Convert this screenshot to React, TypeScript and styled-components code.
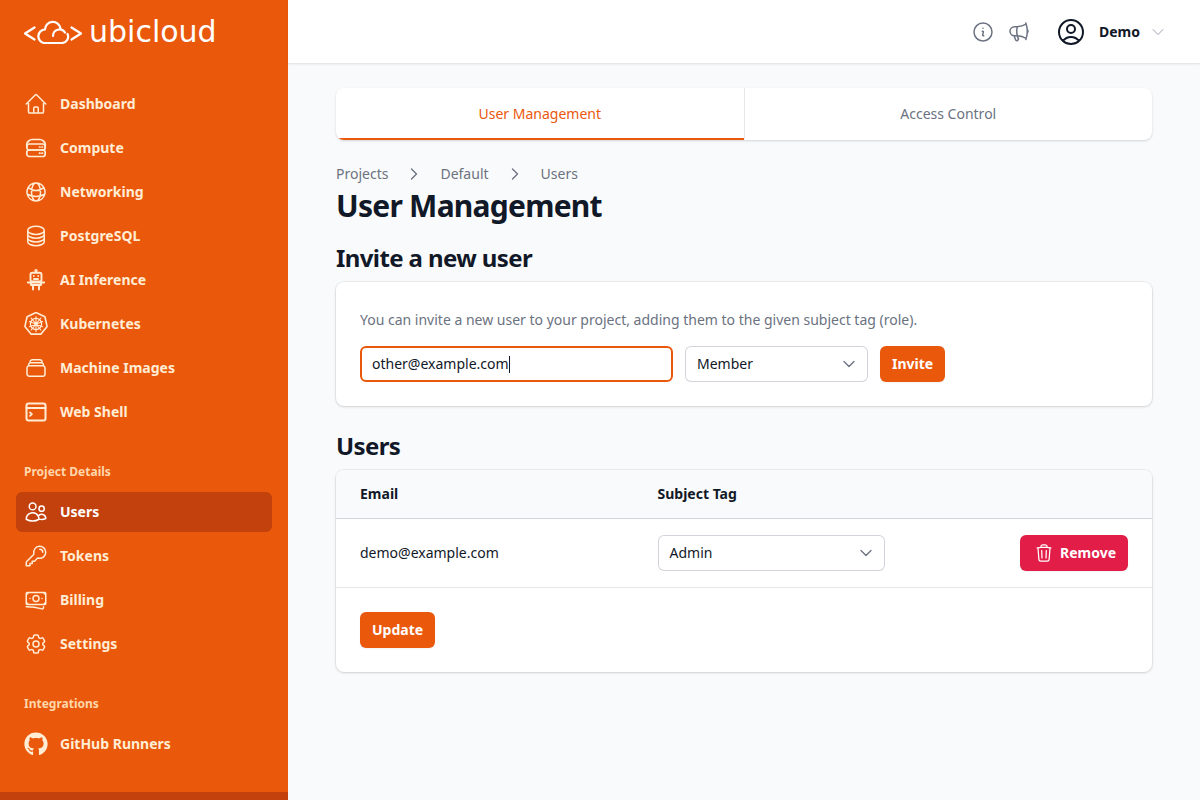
import React from 'react';
import styled, { createGlobalStyle } from 'styled-components';
import {
  HiOutlineHome, HiOutlineGlobeAlt, HiOutlineCircleStack, HiOutlineRectangleStack,
  HiOutlineUsers, HiOutlineKey, HiOutlineBanknotes, HiOutlineCog6Tooth,
  HiOutlineInformationCircle, HiOutlineMegaphone, HiOutlineUserCircle,
  HiOutlineChevronDown, HiOutlineChevronRight, HiOutlineTrash,
} from 'react-icons/hi2';
import { FaGithub } from 'react-icons/fa';

const Global = createGlobalStyle`
  html, body { margin: 0; padding: 0; height: 100%; }
  body { font-family: "Noto Sans", "Liberation Sans", sans-serif; line-height: 20px; background: #f9fafb; color: #111827; overflow: hidden; }
  * { box-sizing: border-box; }
`;

const Page = styled.div`display: flex; width: 1200px; height: 800px; overflow: hidden;`;
const Sidebar = styled.aside`width: 288px; height: 800px; flex: none; background: #ea580c; display: flex; flex-direction: column; border-bottom: 8px solid #c2410c;`;
const LogoRow = styled.div`height: 64px; padding-left: 24px; display: flex; align-items: center; gap: 6px; color: #fff; flex: none;`;
const Wordmark = styled.span`font-family: "DejaVu Sans", sans-serif; font-weight: 400; font-size: 30px; line-height: 1; color: #fff; position: relative; top: 0;`;
const Nav = styled.nav`padding: 20px 16px 0; display: flex; flex-direction: column; gap: 4px;`;
const NavItem = styled.a<{ $active?: boolean }>`
  height: 40px; padding: 0 8px; display: flex; align-items: center; gap: 12px; border-radius: 6px;
  font-size: 14px; font-weight: 700; color: ${p => (p.$active ? '#fff' : '#ffedd5')};
  background: ${p => (p.$active ? '#c2410c' : 'transparent')};
  svg { width: 24px; height: 24px; flex: none; color: ${p => (p.$active ? '#fff' : '#ffedd5')}; }
`;
const NavLabel = styled.div`
  font-size: 12px; font-weight: 700; line-height: 16px; color: #fed7aa; padding-left: 8px;
  margin-top: 28px; margin-bottom: 8px;
`;

const Column = styled.div`flex: 1; display: flex; flex-direction: column; min-width: 0;`;
const Header = styled.header`height: 64px; flex: none; background: #fff; border-bottom: 1px solid #e5e7eb; box-shadow: 0 1px 2px rgba(0,0,0,.05); display: flex; align-items: center; justify-content: flex-end; padding-right: 34px;`;
const HeaderIcon = styled.span`display: flex; color: #6b7280; margin-right: 12px; svg { width: 24px; height: 24px; }`;
const Profile = styled.div`display: flex; align-items: center; margin-left: 12px;`;
const Avatar = styled.span`display: flex; color: #111827; margin-right: 12px; svg { width: 32px; height: 32px; }`;
const ProfileName = styled.span`font-size: 14px; font-weight: 700; color: #111827; margin-right: 10px;`;
const ProfileChevron = styled.span`display: flex; color: #9ca3af; svg { width: 16px; height: 16px; }`;

const Main = styled.main`flex: 1; padding: 24px 48px 0;`;
const Tabs = styled.div`display: flex; height: 52px; background: #fff; border-radius: 8px; box-shadow: 0 1px 3px rgba(0,0,0,.1), 0 1px 2px rgba(0,0,0,.06); overflow: hidden;`;
const Tab = styled.div<{ $active?: boolean }>`
  flex: 1; display: flex; align-items: center; justify-content: center; padding-top: 2px; font-size: 14px; font-weight: 400;
  color: ${p => (p.$active ? '#ea580c' : '#6b7280')};
  border-bottom: 2px solid ${p => (p.$active ? '#ea580c' : 'transparent')};
  & + & { border-left: 1px solid #e5e7eb; }
`;
const Crumbs = styled.div`display: flex; align-items: center; margin-top: 24px; height: 20px; font-size: 14px; color: #6b7280; svg { width: 16px; height: 16px; margin: 0 18px; color: #6b7280; stroke-width: 2; }`;
const Title = styled.h1`margin: 4px 0 0; font-size: 30px; line-height: 36px; font-weight: 700; letter-spacing: -0.025em; color: #111827;`;
const Section = styled.h2<{ $top: number }>`margin: ${p => p.$top}px 0 8px; font-size: 24px; line-height: 32px; font-weight: 700; letter-spacing: -0.025em; color: #111827;`;
const Card = styled.section`background: #fff; border-radius: 8px; box-shadow: 0 1px 3px rgba(0,0,0,.12), 0 0 0 1px rgba(0,0,0,.05);`;
const InviteBody = styled.div`padding: 24px;`;
const Help = styled.p`margin: 4px 0 16px; font-size: 14px; line-height: 20px; color: #6b7280;`;
const InviteForm = styled.div`display: flex; gap: 12px;`;
const FakeInput = styled.div`width: 313px; height: 36px; border-radius: 6px; border: 2px solid #ea580c; background: #fff; display: flex; align-items: center; padding-left: 10px; font-size: 14px; color: #111827;`;
const Caret = styled.span`display: inline-block; width: 1px; height: 17px; background: #111827;`;
const Select = styled.div<{ $width: number }>`
  width: ${p => p.$width}px; height: 36px; border-radius: 6px; background: #fff; box-shadow: inset 0 0 0 1px #d1d5db;
  display: flex; align-items: center; justify-content: space-between; padding: 0 11px 0 12px; font-size: 14px; color: #111827;
  svg { width: 16px; height: 16px; color: #6b7280; stroke-width: 2; }
`;
const Button = styled.button<{ $danger?: boolean }>`
  height: 36px; border: 0; border-radius: 6px; padding: 0 12px 0 ${p => (p.$danger ? 14 : 12)}px; display: inline-flex; align-items: center; gap: 6px;
  font-family: inherit; font-size: 14px; line-height: 20px; font-weight: 700; color: #fff;
  background: ${p => (p.$danger ? '#e11d48' : '#ea580c')};
  box-shadow: 0 1px 2px rgba(0,0,0,.05);
  svg { width: 20px; height: 20px; }
`;
const TableHead = styled.div`height: 49px; display: grid; grid-template-columns: 297.5px 1fr; align-items: center; padding: 0 24px; background: #f9fafb; border-bottom: 1px solid #d1d5db; border-radius: 8px 8px 0 0; font-size: 14px; font-weight: 700; color: #111827;`;
const TableRow = styled.div`height: 69px; display: grid; grid-template-columns: 297.5px 1fr auto; align-items: center; padding: 0 24px; border-bottom: 1px solid #e5e7eb; font-size: 14px; color: #111827;`;
const TableFoot = styled.div`padding: 24px;`;

const Logo = () => (
  <svg width="59" height="24" viewBox="0 0 59 24" fill="none" stroke="#fff" strokeWidth="2.2" strokeLinecap="round" strokeLinejoin="round">
    <path d="M10.5 7.5 1 13.5l9.5 6" />
    <path d="M47.5 7.5 57 13.5l-9.5 6" />
    <path d="M36.5 8.5A7.8 7.8 0 0 0 21 9.5 6.8 6.8 0 0 0 20 23H38a6.3 6.3 0 0 0 5.5-9" />
    <path d="M29 16a6.5 6.5 0 0 1 12-3.5" />
  </svg>
);
const Stroke: React.FC<{ children: React.ReactNode }> = ({ children }) => (
  <svg viewBox="0 0 24 24" fill="none" stroke="currentColor" strokeWidth="1.7" strokeLinecap="round" strokeLinejoin="round">{children}</svg>
);
const ComputeIcon = () => (
  <Stroke>
    <path d="M2.8 11V8C2.8 6 6 3.5 8 3.500h8c2 0 5.200 2.500 5.200 4.500V11" />
    <rect x="2.800" y="8" width="18.400" height="6" rx="2.500" />
    <rect x="2.800" y="14" width="18.400" height="6.500" rx="2.500" />
    <path d="M15.500 11h.5M18 11h.5M15.500 17.200h.5M18 17.200h.5" />
  </Stroke>
);
const RobotIcon = () => (
  <svg viewBox="0 0 24 24" fill="none" stroke="currentColor" strokeWidth="1.9" strokeLinecap="round" strokeLinejoin="round">
    <circle cx="12" cy="2.600" r="1" strokeWidth="1.400" />
    <rect x="6.500" y="4.800" width="11" height="8.700" rx="1.800" />
    <circle cx="9.800" cy="8" r=".9" fill="currentColor" stroke="none" />
    <circle cx="14.200" cy="8" r=".9" fill="currentColor" stroke="none" />
    <path d="M10 11h4M3.800 14.500h16.400M7 14.500v2.500h10v-2.500M9 17v4.500M15 17v4.500" />
  </svg>
);
const KubeIcon = () => (
  <svg viewBox="0 0 24 24" fill="none" stroke="currentColor" strokeWidth="1.6" strokeLinecap="round" strokeLinejoin="round">
    <path d="M12 .5 20.900 4.800l2.200 9.600-6.100 7.700H7l-6.100-7.700L3.100 4.800Z" />
    <circle cx="12" cy="12" r="5.600" strokeWidth="1.300" />
    <circle cx="12" cy="12" r="1.200" />
    <path d="M12 4.500v15M5.500 9.500l13 5.300M18.500 9.500l-13 5.300M7.200 18 16.800 6M16.800 18 7.200 6" strokeWidth="1.100" />
  </svg>
);
const ShellIcon = () => (
  <Stroke>
    <rect x="2.500" y="3.500" width="19" height="17" rx="2" strokeWidth="2" />
    <path d="M2.500 8h19" strokeWidth="2" />
    <path d="m6 12.500 2 1.700-2 1.700" />
  </Stroke>
);

const main = [
  ['Dashboard', <HiOutlineHome />],
  ['Compute', <ComputeIcon />],
  ['Networking', <HiOutlineGlobeAlt />],
  ['PostgreSQL', <HiOutlineCircleStack />],
  ['AI Inference', <RobotIcon />],
  ['Kubernetes', <KubeIcon />],
  ['Machine Images', <HiOutlineRectangleStack />],
  ['Web Shell', <ShellIcon />],
] as const;
const details = [
  ['Users', <HiOutlineUsers />],
  ['Tokens', <HiOutlineKey />],
  ['Billing', <HiOutlineBanknotes />],
  ['Settings', <HiOutlineCog6Tooth />],
] as const;

export default function App() {
  return (
    <Page>
      <Global />
      <Sidebar>
        <LogoRow><Logo /><Wordmark>ubicloud</Wordmark></LogoRow>
        <Nav>
          {main.map(([label, icon]) => <NavItem key={label}>{icon}{label}</NavItem>)}
          <NavLabel>Project Details</NavLabel>
          {details.map(([label, icon]) => <NavItem key={label} $active={label === 'Users'}>{icon}{label}</NavItem>)}
          <NavLabel>Integrations</NavLabel>
          <NavItem><FaGithub />GitHub Runners</NavItem>
        </Nav>
      </Sidebar>
      <Column>
        <Header>
          <HeaderIcon><HiOutlineInformationCircle /></HeaderIcon>
          <HeaderIcon><HiOutlineMegaphone /></HeaderIcon>
          <Profile>
            <Avatar><HiOutlineUserCircle /></Avatar>
            <ProfileName>Demo</ProfileName>
            <ProfileChevron><HiOutlineChevronDown /></ProfileChevron>
          </Profile>
        </Header>
        <Main>
          <Tabs>
            <Tab $active>User Management</Tab>
            <Tab>Access Control</Tab>
          </Tabs>
          <Crumbs>Projects<HiOutlineChevronRight />Default<HiOutlineChevronRight />Users</Crumbs>
          <Title>User Management</Title>
          <Section $top={18}>Invite a new user</Section>
          <Card>
            <InviteBody>
              <Help>You can invite a new user to your project, adding them to the given subject tag (role).</Help>
              <InviteForm>
                <FakeInput>other@example.com<Caret /></FakeInput>
                <Select $width={183}>Member<HiOutlineChevronDown /></Select>
                <Button>Invite</Button>
              </InviteForm>
            </InviteBody>
          </Card>
          <Section $top={24}>Users</Section>
          <Card>
            <TableHead><span>Email</span><span>Subject Tag</span></TableHead>
            <TableRow>
              <span>demo@example.com</span>
              <Select $width={227}>Admin<HiOutlineChevronDown /></Select>
              <Button $danger><HiOutlineTrash />Remove</Button>
            </TableRow>
            <TableFoot><Button>Update</Button></TableFoot>
          </Card>
        </Main>
      </Column>
    </Page>
  );
}
